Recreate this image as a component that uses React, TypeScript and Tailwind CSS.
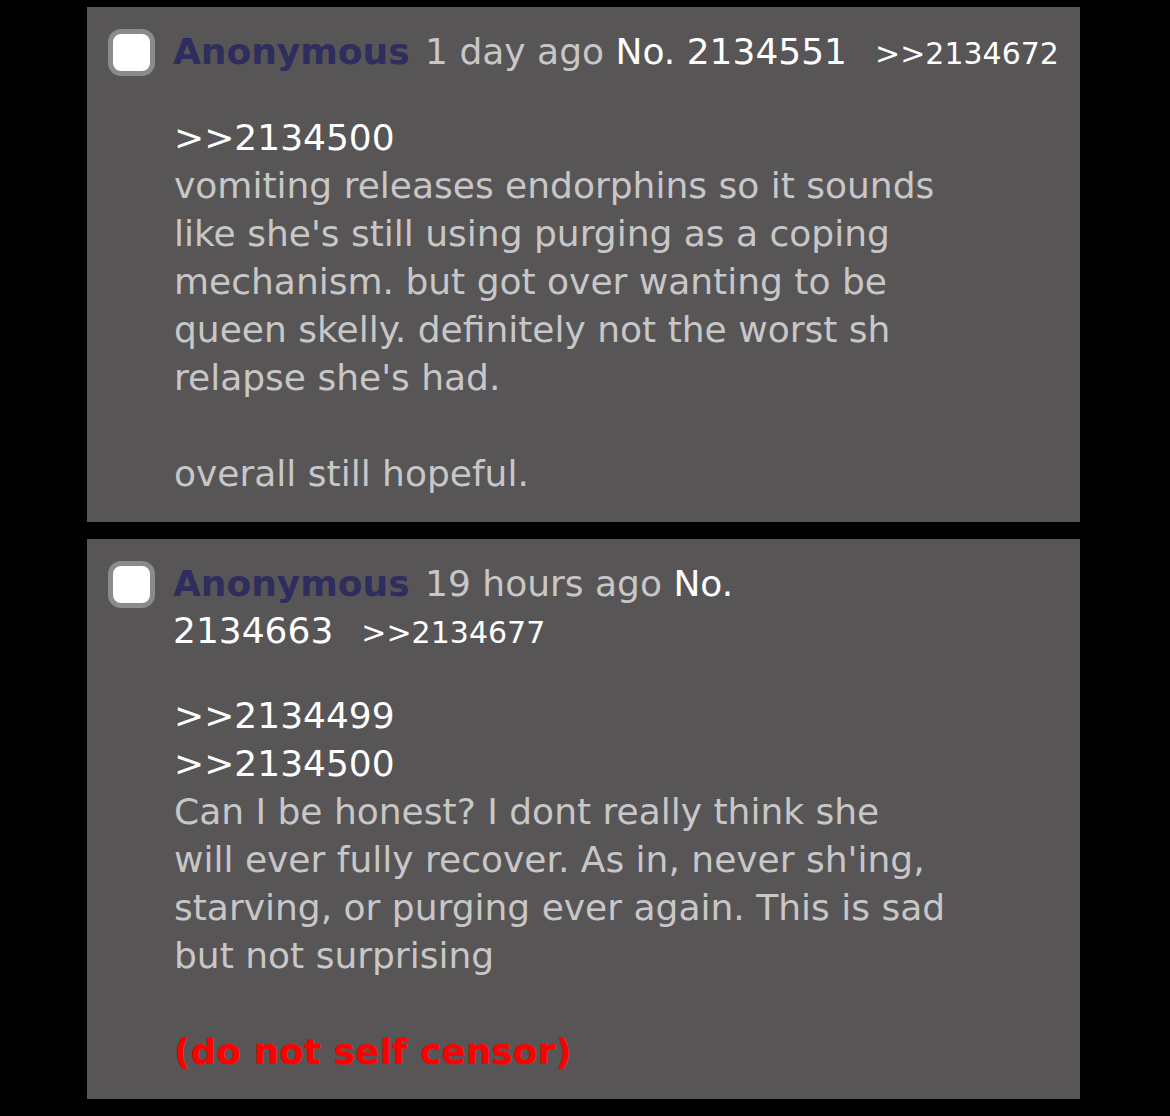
import React from "react";

function Checkbox() {
  return (
    <div className="w-[47px] h-[47px] shrink-0 rounded-[13px] border-[5px] border-[#8b8a8c] bg-white" />
  );
}

export default function App() {
  return (
    <div
      className="min-h-[1116px] w-[1170px] bg-black pt-[7px] pb-[18px] flex flex-col items-start gap-[17px] text-[36px] leading-[48px]"
      style={{ fontFamily: '"DejaVu Sans", Verdana, sans-serif' }}
    >
      {/* Post 1 */}
      <div className="ml-[87px] w-[993px] bg-[#575556] pl-[21px] pr-[10px] pt-[21px] pb-[24px]">
        <div className="flex items-start gap-[18px]">
          <div className="pt-[1px]">
            <Checkbox />
          </div>
          <div className="flex-1 text-[#c8c7c8]">
            <span className="font-bold text-[#2e2d5d] mr-[4px]">Anonymous</span> 1 day ago{" "}
            <span className="whitespace-nowrap text-white">
              No. 2134551
              <span className="ml-[28px] text-[30px]">&gt;&gt;2134672</span>
            </span>
          </div>
        </div>
        <div className="pl-[66px] mt-[36px] text-[#c8c7c8]">
          <div className="text-white">&gt;&gt;2134500</div>
          <div>
            vomiting releases endorphins so it sounds
            <br />
            like she's still using purging as a coping
            <br />
            mechanism. but got over wanting to be
            <br />
            queen skelly. definitely not the worst sh
            <br />
            relapse she's had.
          </div>
          <div className="h-[48px]" />
          <div>overall still hopeful.</div>
        </div>
      </div>

      {/* Post 2 */}
      <div className="ml-[87px] w-[993px] bg-[#575556] pl-[21px] pr-[10px] pt-[21px] pb-[23px]">
        <div className="flex items-start gap-[18px]">
          <div className="pt-[1px]">
            <Checkbox />
          </div>
          <div className="flex-1 text-[#c8c7c8] leading-[47px]">
            <span className="font-bold text-[#2e2d5d] mr-[4px]">Anonymous</span> 19 hours ago{" "}
            <span className="text-white">No.</span>{" "}
            <span className="whitespace-nowrap text-white">
              2134663
              <span className="ml-[28px] text-[30px]">&gt;&gt;2134677</span>
            </span>
          </div>
        </div>
        <div className="pl-[66px] mt-[36px] text-[#c8c7c8]">
          <div className="text-white">&gt;&gt;2134499</div>
          <div className="text-white">&gt;&gt;2134500</div>
          <div>
            Can I be honest? I dont really think she
            <br />
            will ever fully recover. As in, never sh'ing,
            <br />
            starving, or purging ever again. This is sad
            <br />
            but not surprising
          </div>
          <div className="h-[48px]" />
          <div className="font-bold text-[#ff0000]">(do not self censor)</div>
        </div>
      </div>
    </div>
  );
}
